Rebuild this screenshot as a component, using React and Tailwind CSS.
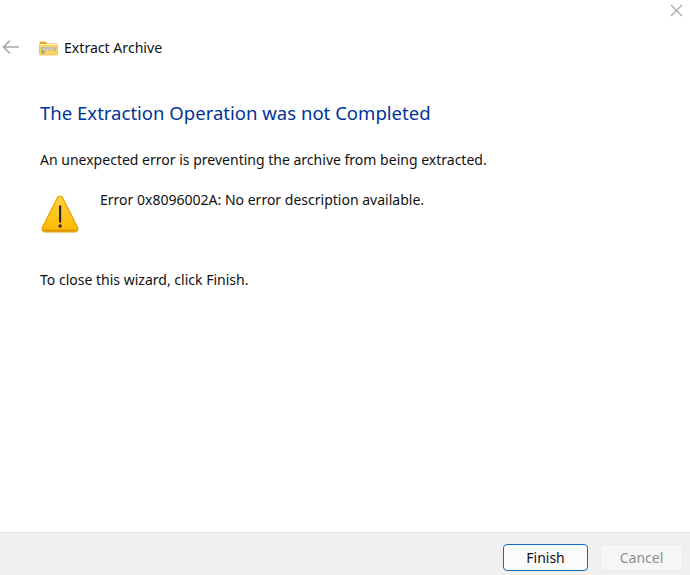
import React from "react";

const FF = { fontFamily: '"Noto Sans", sans-serif' };

function FolderIcon() {
  return (
    <svg width="19" height="16" viewBox="0 0 19 16">
      <path d="M0.5 2.5 a1 1 0 0 1 1-1 h5 l2 2 h9 a1 1 0 0 1 1 1 v1 h-18z" fill="#e8a92c" />
      <rect x="0.5" y="4.5" width="18" height="10.5" rx="0.8" fill="#fbd45f" stroke="#e6b13f" strokeWidth="0.6" />
      <rect x="0.5" y="4" width="18" height="1" fill="#fff3c0" />
      <rect x="2" y="7" width="15" height="3.5" fill="#b3b09e" />
      <path d="M3 8h1M5 8h1M7 8h1M9 8h1M11 8h1M13 8h1M15 8h1M4 9.5h1M6 9.5h1M8 9.5h1M10 9.5h1M12 9.5h1M14 9.5h1" stroke="#f2f0e4" strokeWidth="1" />
      <rect x="2.5" y="10.5" width="3" height="3" fill="#9c9a8c" />
    </svg>
  );
}

function WarningIcon() {
  return (
    <svg width="38" height="38" viewBox="0 0 38 38">
      <defs>
        <linearGradient id="warnFill" x1="0" y1="0" x2="0" y2="1">
          <stop offset="0" stopColor="#ffd23c" />
          <stop offset="1" stopColor="#fdb900" />
        </linearGradient>
      </defs>
      <path
        d="M19 1 C20.2 1 21 1.7 21.6 2.8 L36.6 32.6 C37.5 34.5 36.4 37 34 37 L4 37 C1.6 37 0.5 34.5 1.4 32.6 L16.4 2.8 C17 1.7 17.8 1 19 1 Z"
        fill="url(#warnFill)"
        stroke="#e5a100"
        strokeWidth="1.2"
      />
      <path d="M2 34.5 Q3 36.6 5 36.6 H33 Q35 36.6 36 34.5 Z" fill="#dd9500" />
      <rect x="18" y="10.5" width="2.2" height="17" fill="#1d2a3a" />
      <circle cx="19.1" cy="31" r="1.7" fill="#1d2a3a" />
    </svg>
  );
}

export default function App() {
  return (
    <div className="flex h-[575px] w-[690px] flex-col overflow-hidden bg-white text-[14.03px] text-[#111]" style={FF}>
      <div className="flex justify-end pr-[7px] pt-[4px]">
        <svg width="13" height="13" viewBox="0 0 13 13">
          <path d="M1 1 L12 12 M12 1 L1 12" stroke="#a3a3a3" strokeWidth="1.1" />
        </svg>
      </div>
      <div className="mt-[21px] flex h-[20px] items-center">
        <svg className="mb-[2px] ml-[2px]" width="18" height="16" viewBox="0 0 18 16">
          <path d="M8 1.5 L1.5 8 L8 14.5 M1.5 8 H17" fill="none" stroke="#a6a6a6" strokeWidth="1.6" />
        </svg>
        <div className="ml-[19px]"><FolderIcon /></div>
        <span className="ml-[6px] text-[14.1px]">Extract Archive</span>
      </div>

      <div className="flex-1 pl-[40px]">
        <h1 className="mt-[41px] text-[18.55px] font-normal leading-[28px] text-[#003399]">
          The Extraction Operation was not Completed
        </h1>
        <p className="mt-[23px] leading-[20px]">An unexpected error is preventing the archive from being extracted.</p>
        <div className="mt-[20px] flex">
          <div className="ml-[1px] mt-[5px] w-[59px]"><WarningIcon /></div>
          <p className="leading-[20px]">Error 0x8096002A: No error description available.</p>
        </div>
        <p className="mt-[37px] leading-[20px]">To close this wizard, click Finish.</p>
      </div>

      <div className="flex h-[43px] items-start justify-end gap-[12px] border-t border-[#dfdfdf] bg-[#f0f0f0] pr-[7px] pt-[11px]">
        <button className="h-[27px] w-[85px] rounded-[4px] border border-[#0f6cbd] bg-[#fbfbfb] text-[14px] leading-none text-[#111]">
          Finish
        </button>
        <button className="h-[27px] w-[83px] rounded-[4px] border border-[#ececec] bg-[#f6f6f6] text-[14px] leading-none text-[#8e8e8e]">
          Cancel
        </button>
      </div>
    </div>
  );
}
